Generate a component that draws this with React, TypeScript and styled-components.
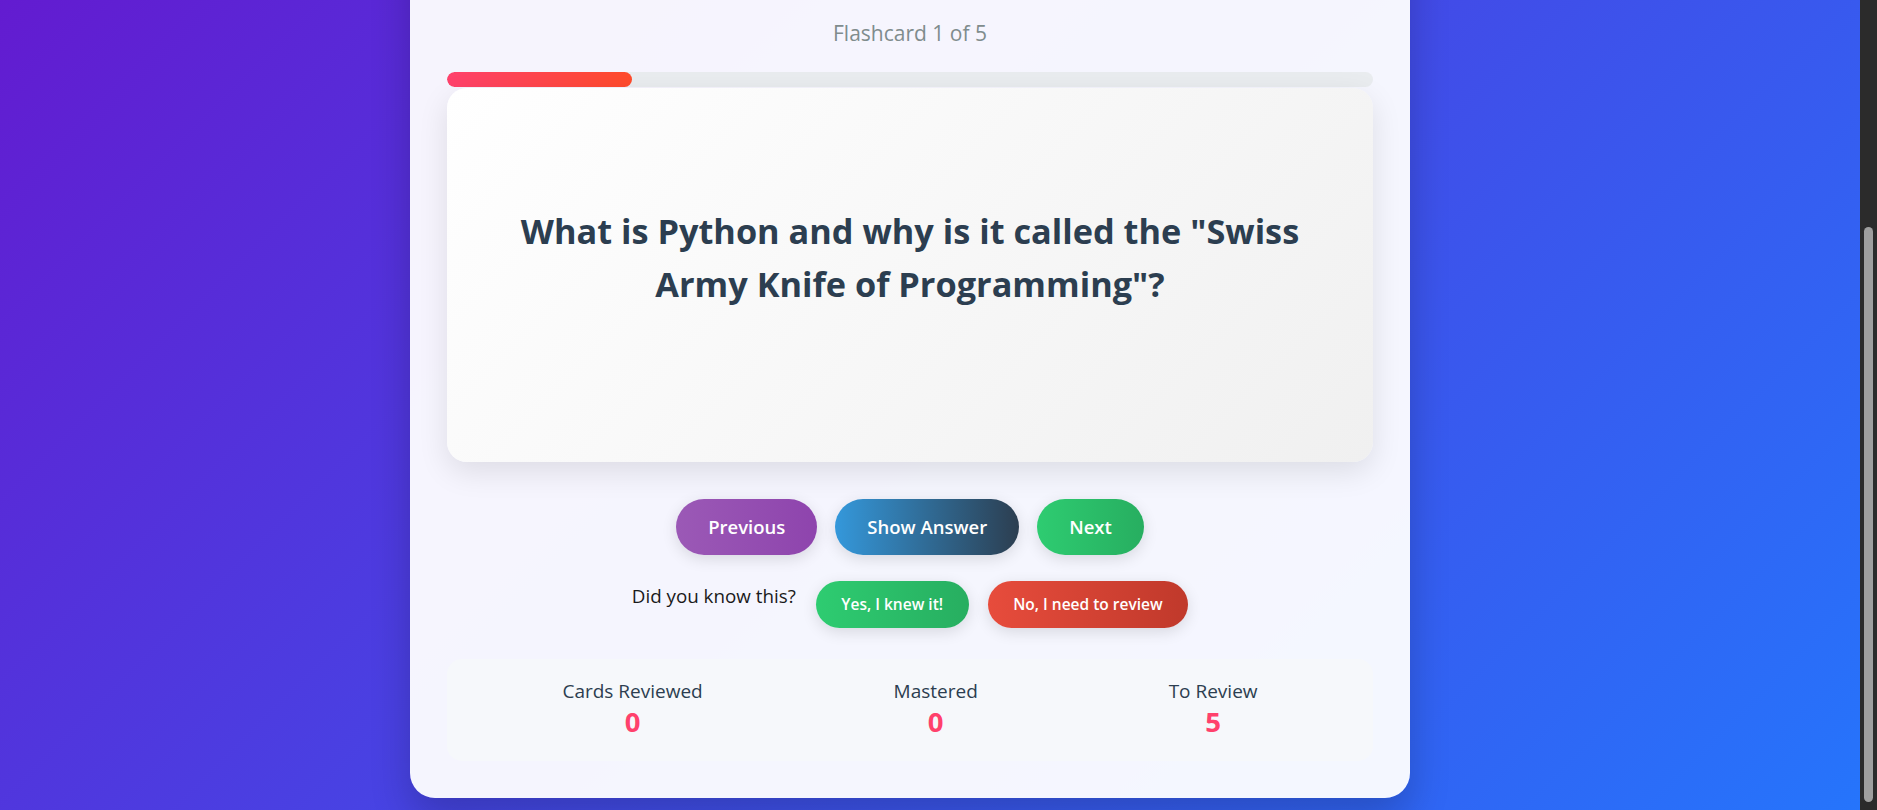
import React, { useLayoutEffect } from "react";
import styled, { createGlobalStyle } from "styled-components";

const Global = createGlobalStyle`
  * {
    box-sizing: border-box;
  }
  body {
    margin: 0;
    min-height: 100vh;
    font-family: "Open Sans", "Noto Sans", sans-serif;
    background: linear-gradient(135deg, #6a11cb 0%, #2575fc 100%);
    color: #2c3e50;
  }
`;

const Page = styled.div`
  display: flex;
  justify-content: center;
  padding: 20px 57px 12px 0;
`;

const ScrollTrack = styled.div`
  position: fixed;
  top: 0;
  right: 0;
  width: 17px;
  height: 100vh;
  background: #2b2b2b;
`;

const ScrollThumb = styled.div<{ $top: number; $size: number }>`
  position: absolute;
  left: 4px;
  width: 9px;
  top: ${(p) => p.$top}px;
  height: ${(p) => p.$size}px;
  border-radius: 5px;
  background: #9f9f9f;
`;

const Container = styled.main`
  width: 1000px;
  padding: 37px;
  background: rgba(255, 255, 255, 0.95);
  border-radius: 25px;
  box-shadow: 0 20px 40px rgba(0, 0, 0, 0.2);
  display: flex;
  flex-direction: column;
`;

/* space taken by the page header, which lies above the scrolled view */
const HeaderSpace = styled.div`
  height: 278px;
`;

const Counter = styled.div`
  text-align: center;
  font-size: 21px;
  line-height: 26px;
  color: #7f8c8d;
  margin-bottom: 26px;
`;

const ProgressTrack = styled.div`
  height: 15px;
  border-radius: 10px;
  background: #e9ecef;
  overflow: hidden;
  margin-bottom: 1px;
`;

const ProgressFill = styled.div`
  height: 100%;
  border-radius: 10px;
  background: linear-gradient(90deg, #ff416c, #ff4b2b);
`;

const Card = styled.section`
  min-height: 374px;
  border-radius: 20px;
  background: linear-gradient(135deg, #ffffff 0%, #f0f0f0 100%);
  box-shadow: 0 10px 30px rgba(0, 0, 0, 0.1);
  display: flex;
  align-items: center;
  justify-content: center;
  padding: 40px 48px 74px;
`;

const Question = styled.h2`
  margin: 0;
  max-width: 800px;
  text-align: center;
  font-size: 34.3px;
  line-height: 52.7px;
  font-weight: 700;
  color: #2c3e50;
`;

const Controls = styled.div`
  display: flex;
  justify-content: center;
  gap: 18px;
  margin-top: 37px;
`;

const gradients: Record<string, string> = {
  purple: "linear-gradient(90deg, #9b59b6, #8e44ad)",
  dark: "linear-gradient(90deg, #3498db, #2c3e50)",
  green: "linear-gradient(90deg, #2ecc71, #27ae60)",
  red: "linear-gradient(90deg, #e74c3c, #c0392b)",
};

const NavButton = styled.button<{ $tone: string }>`
  border: none;
  border-radius: 50px;
  padding: 16px 32px;
  font-family: inherit;
  font-size: 18.5px;
  line-height: 24px;
  font-weight: 600;
  color: #fff;
  background: ${(p) => gradients[p.$tone]};
  box-shadow: 0 4px 15px rgba(0, 0, 0, 0.12);
  cursor: pointer;
`;

const Feedback = styled.div`
  display: flex;
  justify-content: center;
  align-items: center;
  gap: 19px;
  margin-top: 26px;
`;

const FeedbackLabel = styled.span`
  font-size: 18.8px;
  line-height: 24px;
  color: #1a1a1a;
  margin-right: 1px;
  margin-bottom: 17px;
`;

const RateButton = styled.button<{ $tone: string }>`
  border: none;
  border-radius: 30px;
  padding: 13px 25.6px;
  font-family: inherit;
  font-size: 15.5px;
  line-height: 21px;
  font-weight: 600;
  color: #fff;
  background: ${(p) => gradients[p.$tone]};
  box-shadow: 0 4px 15px rgba(0, 0, 0, 0.12);
  cursor: pointer;
`;

const Stats = styled.div`
  margin-top: 31px;
  display: flex;
  justify-content: space-around;
  padding: 20px;
  border-radius: 15px;
  background: #f6f8fb;
`;

const StatItem = styled.div`
  display: flex;
  flex-direction: column;
  align-items: center;
`;

const StatLabel = styled.span`
  font-size: 19px;
  line-height: 24px;
  font-weight: 500;
  color: #2c3e50;
`;

const StatValue = styled.span`
  font-size: 27.5px;
  line-height: 38px;
  font-weight: 700;
  color: #ff416c;
`;

const stats = [
  { label: "Cards Reviewed", value: 0 },
  { label: "Mastered", value: 0 },
  { label: "To Review", value: 5 },
];

export default function App() {
  useLayoutEffect(() => {
    window.scrollTo(0, document.documentElement.scrollHeight);
    const t = setTimeout(() => window.scrollTo(0, document.documentElement.scrollHeight), 50);
    return () => clearTimeout(t);
  }, []);

  const current = 1;
  const total = 5;

  return (
    <>
      <Global />
      <Page>
        <Container>
          <HeaderSpace />
          <Counter>
            Flashcard {current} of {total}
          </Counter>
          <ProgressTrack>
            <ProgressFill style={{ width: `${(current / total) * 100}%` }} />
          </ProgressTrack>
          <Card>
            <Question>
              What is Python and why is it called the "Swiss Army Knife of Programming"?
            </Question>
          </Card>
          <Controls>
            <NavButton $tone="purple">Previous</NavButton>
            <NavButton $tone="dark">Show Answer</NavButton>
            <NavButton $tone="green">Next</NavButton>
          </Controls>
          <Feedback>
            <FeedbackLabel>Did you know this?</FeedbackLabel>
            <RateButton $tone="green">Yes, I knew it!</RateButton>
            <RateButton $tone="red">No, I need to review</RateButton>
          </Feedback>
          <Stats>
            {stats.map((s) => (
              <StatItem key={s.label}>
                <StatLabel>{s.label}</StatLabel>
                <StatValue>{s.value}</StatValue>
              </StatItem>
            ))}
          </Stats>
        </Container>
      </Page>
      <ScrollTrack>
        <ScrollThumb $top={227} $size={575} />
      </ScrollTrack>
    </>
  );
}
